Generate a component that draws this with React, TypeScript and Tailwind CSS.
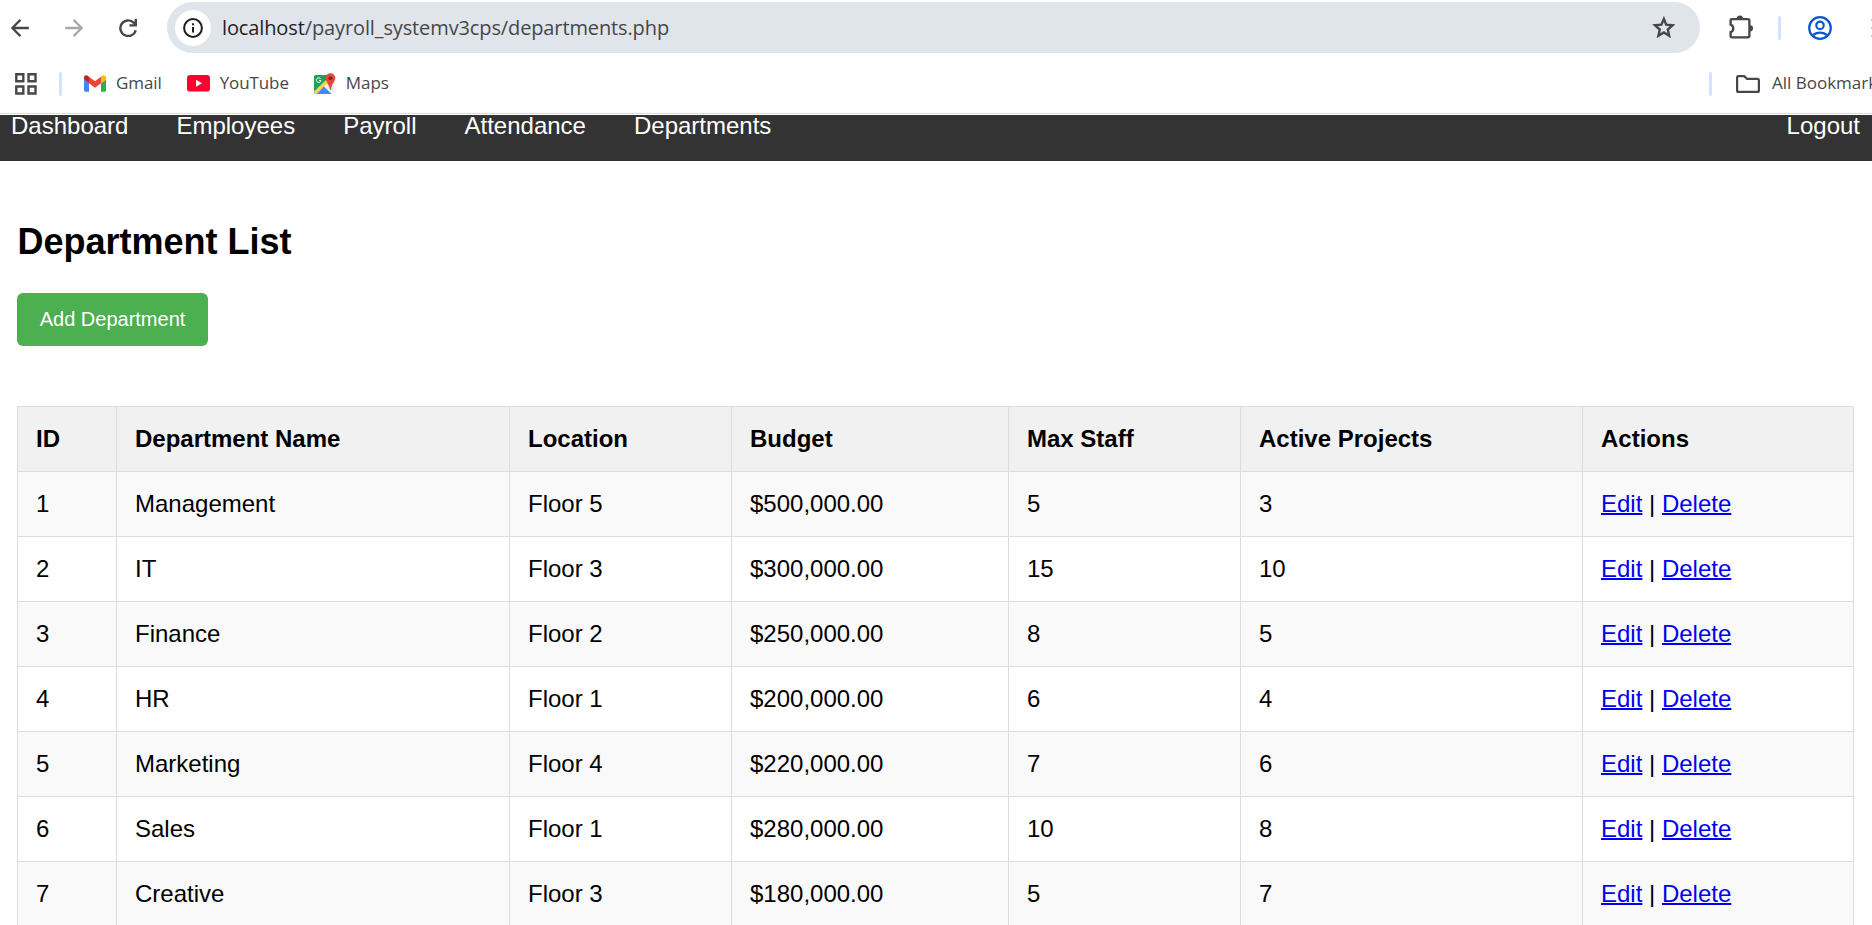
import type { ReactNode } from "react";

const departments = [
  { id: 1, name: "Management", location: "Floor 5", budget: "$500,000.00", staff: 5, projects: 3 },
  { id: 2, name: "IT", location: "Floor 3", budget: "$300,000.00", staff: 15, projects: 10 },
  { id: 3, name: "Finance", location: "Floor 2", budget: "$250,000.00", staff: 8, projects: 5 },
  { id: 4, name: "HR", location: "Floor 1", budget: "$200,000.00", staff: 6, projects: 4 },
  { id: 5, name: "Marketing", location: "Floor 4", budget: "$220,000.00", staff: 7, projects: 6 },
  { id: 6, name: "Sales", location: "Floor 1", budget: "$280,000.00", staff: 10, projects: 8 },
  { id: 7, name: "Creative", location: "Floor 3", budget: "$180,000.00", staff: 5, projects: 7 },
];

const headings = ["ID", "Department Name", "Location", "Budget", "Max Staff", "Active Projects", "Actions"];

function Arrow({ className }: { className: string }) {
  return (
    <svg className={className} width="18" height="18" viewBox="0 0 18 18" fill="none" stroke="currentColor" strokeWidth="2.3">
      <path d="M17.8 9H1.6M9.4 0.9L1.3 9l8.1 8.1" />
    </svg>
  );
}

function Reload() {
  return (
    <svg className="ml-9 shrink-0 text-[#474747]" width="18" height="18" viewBox="0 0 18 18" fill="none" stroke="currentColor" strokeWidth="2.4">
      <path d="M16.7 11.2A7.8 7.8 0 1 1 14.6 3.6L16.4 5.4" />
      <path d="M16.8 0v6.4h-6.4" />
    </svg>
  );
}

function Info() {
  return (
    <svg width="20" height="20" viewBox="0 0 20 20" fill="none" stroke="#1f1f1f" strokeWidth="2">
      <circle cx="10" cy="10" r="8.9" />
      <path d="M10 8.9v5.6M10 5.2v2" />
    </svg>
  );
}

function Star() {
  return (
    <svg className="mr-[25px] mb-px shrink-0" width="23" height="22" viewBox="0 0 23 22" fill="none" stroke="#474747" strokeWidth="2.4">
      <path d="M11.9 2.9l2.3 5.8 6.4.6-4.8 4.2 1.4 6.3-5.3-3.3-5.5 3.3 1.4-6.3L3 9.3l6.4-.6z" />
    </svg>
  );
}

function Puzzle() {
  return (
    <svg className="mb-px ml-[29px] shrink-0" width="25" height="24" viewBox="0 0 25 24">
      <path d="M2.8 4.1h16a1.6 1.6 0 0 1 1.6 1.6v15.1a1.6 1.6 0 0 1-1.6 1.6h-16a1.2 1.2 0 0 1-1.2-1.2v-4.1a3.9 3.9 0 0 0 0-7.4V5.3a1.2 1.2 0 0 1 1.2-1.2z" fill="none" stroke="#474747" strokeWidth="2.3" />
      <path d="M7.8 3.5a3.1 3.1 0 0 1 6.2 0zM21 10.2a3.1 3.1 0 0 1 0 6.2z" fill="#474747" />
    </svg>
  );
}

function Profile() {
  return (
    <svg className="ml-[27px] shrink-0" width="24" height="24" viewBox="0 0 24 24" fill="none" stroke="#0b57d0" strokeWidth="2.2">
      <circle cx="12" cy="12" r="10.8" />
      <circle cx="12" cy="9.4" r="3.7" />
      <path d="M4.2 19.6c4.6-4.1 11-4.1 15.6 0" />
    </svg>
  );
}

function Apps() {
  return (
    <svg className="ml-[15px] shrink-0" width="22" height="22" viewBox="0 0 22 22" fill="none" stroke="#474747" strokeWidth="2.4">
      <path d="M1.3 1.3h7v7h-7zM13.5 1.3h7v7h-7zM1.3 13.5h7v7h-7zM13.5 13.5h7v7h-7z" />
    </svg>
  );
}

function Gmail() {
  return (
    <svg width="22" height="17" viewBox="52 42 88 66">
      <path fill="#4285f4" d="M58 108h14V74L52 59v43c0 3.32 2.69 6 6 6" />
      <path fill="#34a853" d="M120 108h14c3.32 0 6-2.69 6-6V59l-20 15" />
      <path fill="#fbbc04" d="M120 48v26l20-15v-8c0-7.42-8.47-11.65-14.4-7.2" />
      <path fill="#ea4335" d="M72 74V48l24 18 24-18v26L96 92" />
      <path fill="#c5221f" d="M52 51v8l20 15V48l-5.6-4.2c-5.94-4.45-14.4-.22-14.4 7.2" />
    </svg>
  );
}

function YouTube() {
  return (
    <svg width="23" height="17" viewBox="0 0 23 17">
      <rect width="23" height="16.6" rx="3.2" fill="#ff0033" />
      <path d="M9 4.8v7l6-3.5z" fill="#fff" />
    </svg>
  );
}

function Maps() {
  return (
    <svg width="22" height="22" viewBox="0 0 22 22">
      <defs>
        <clipPath id="map-tile">
          <rect x="0" y="2" width="19.6" height="19" rx="1.6" />
        </clipPath>
      </defs>
      <g clipPath="url(#map-tile)">
        <rect y="2" width="20" height="20" fill="#e4e4e4" />
        <path d="M0 2h15v6L0 21.5z" fill="#1fa15d" />
        <path d="M0 18.4L12.5 6.6l2.6 3L2.6 21.5H0z" fill="#fbd04b" />
        <path d="M2.4 21.4L10 13.4l8 8z" fill="#4a86f7" />
        <path d="M10.2 13l1.6-1.6 8.4 8.4V22h-1z" fill="#fff" />
      </g>
      <path d="M16.4 0.2a4.9 4.9 0 0 1 4.9 4.9c0 3.8-3.6 4.8-4.3 11.6h-1.2c-.7-6.8-4.3-7.8-4.3-11.6A4.9 4.9 0 0 1 16.4.2z" fill="#e0483a" />
      <circle cx="16.4" cy="5.2" r="1.8" fill="#7c201a" />
      <path d="M6.6 5.9a2.3 2.3 0 1 0 .3 1.8H5" fill="none" stroke="#fff" strokeWidth="1" />
    </svg>
  );
}

function Folder() {
  return (
    <svg className="ml-6 shrink-0" width="24" height="18" viewBox="0 0 24 18" fill="none" stroke="#474747" strokeWidth="2.2">
      <path d="M2.6 1.1h5.6l2.8 2.8h10.4a1.5 1.5 0 0 1 1.5 1.5v10a1.5 1.5 0 0 1-1.5 1.5H2.6a1.5 1.5 0 0 1-1.5-1.5V2.6a1.5 1.5 0 0 1 1.5-1.5z" />
    </svg>
  );
}

function Divider({ className }: { className: string }) {
  return <div className={"h-6 w-[3px] shrink-0 rounded-full bg-[#d3e3fd] " + className} />;
}

function Bookmark({ icon, label, className }: { icon: ReactNode; label: string; className: string }) {
  return (
    <a className={"flex shrink-0 items-center gap-[10px] " + className}>
      {icon}
      <span className="pb-px">{label}</span>
    </a>
  );
}

function BrowserBar() {
  return (
    <header className="h-[115px] shrink-0 bg-white font-['Open_Sans',sans-serif]">
      <div className="flex h-[55px] items-center">
        <Arrow className="ml-[11px] shrink-0 text-[#474747]" />
        <Arrow className="ml-9 shrink-0 rotate-180 text-[#a8a8a8]" />
        <Reload />
        <div className="ml-[30px] flex h-[51px] w-[1533px] shrink-0 items-center rounded-full bg-[#e0e4eb] pl-2">
          <div className="flex size-9 items-center justify-center rounded-full bg-white">
            <Info />
          </div>
          <div className="ml-[11px] flex-1 text-[20px] leading-none tracking-[-0.12px] text-[#474747]">
            <span className="text-[#1f1f1f]">localhost</span>/payroll_systemv3cps/departments.php
          </div>
          <Star />
        </div>
        <Puzzle />
        <Divider className="ml-6" />
        <Profile />
        <div className="ml-[39px] flex flex-col gap-[6px]">
          <i className="size-[2px] bg-[#c9c9c9]" />
          <i className="size-[2px] bg-[#c9c9c9]" />
          <i className="size-[2px] bg-[#c9c9c9]" />
        </div>
      </div>
      <div className="flex h-[59px] items-center overflow-hidden border-b border-[#d9dbdf] pb-px text-[17px] tracking-[-0.1px] whitespace-nowrap text-[#474747]">
        <Apps />
        <Divider className="ml-[22px]" />
        <Bookmark className="ml-[22px]" icon={<Gmail />} label="Gmail" />
        <Bookmark className="ml-[25px]" icon={<YouTube />} label="YouTube" />
        <Bookmark className="ml-[25px]" icon={<Maps />} label="Maps" />
        <div className="ml-auto flex w-[163px] shrink-0 items-center">
          <Divider className="" />
          <Folder />
          <span className="ml-3 pb-px tracking-normal">All Bookmarks</span>
        </div>
      </div>
    </header>
  );
}

export default function App() {
  return (
    <div className="flex h-[925px] w-[1872px] flex-col overflow-hidden bg-white font-['Liberation_Sans',Arial,sans-serif] text-black">
      <BrowserBar />
      <nav className="flex h-[46px] shrink-0 gap-12 bg-[#333333] pr-3 pl-[11px] text-[24px] leading-[22px] text-white">
        <a>Dashboard</a>
        <a>Employees</a>
        <a>Payroll</a>
        <a>Attendance</a>
        <a>Departments</a>
        <a className="ml-auto">Logout</a>
      </nav>
      <main className="pt-[60px] pl-[17px]">
        <h2 className="pl-[0.5px] text-[36px] leading-[41px] font-bold">Department List</h2>
        <button className="mt-[31px] block h-[53px] w-[191px] rounded-md bg-[#4caf50] pb-[2px] text-[20px] text-white">
          Add Department
        </button>
        <table className="mt-[60px] w-[1837px] table-fixed border-separate border-spacing-0 border-t border-l border-[#dddddd] text-left text-[24px] leading-7">
          <colgroup>
            <col className="w-[99px]" />
            <col className="w-[393px]" />
            <col className="w-[222px]" />
            <col className="w-[277px]" />
            <col className="w-[232px]" />
            <col className="w-[342px]" />
            <col className="w-[271px]" />
          </colgroup>
          <thead>
            <tr className="bg-[#f1f1f1]">
              {headings.map((h) => (
                <th key={h} className="h-[65px] border-r border-b border-[#dddddd] px-[18px] py-0 font-bold">
                  {h}
                </th>
              ))}
            </tr>
          </thead>
          <tbody>
            {departments.map((d) => (
              <tr key={d.id} className="odd:bg-[#f9f9f9]">
                {[d.id, d.name, d.location, d.budget, d.staff, d.projects].map((value, i) => (
                  <td key={i} className="h-[65px] border-r border-b border-[#dddddd] px-[18px] py-0">
                    {value}
                  </td>
                ))}
                <td className="h-[65px] border-r border-b border-[#dddddd] px-[18px] py-0">
                  <a className="text-[#0000ee] underline decoration-2">Edit</a> |{" "}
                  <a className="text-[#0000ee] underline decoration-2">Delete</a>
                </td>
              </tr>
            ))}
          </tbody>
        </table>
      </main>
    </div>
  );
}
